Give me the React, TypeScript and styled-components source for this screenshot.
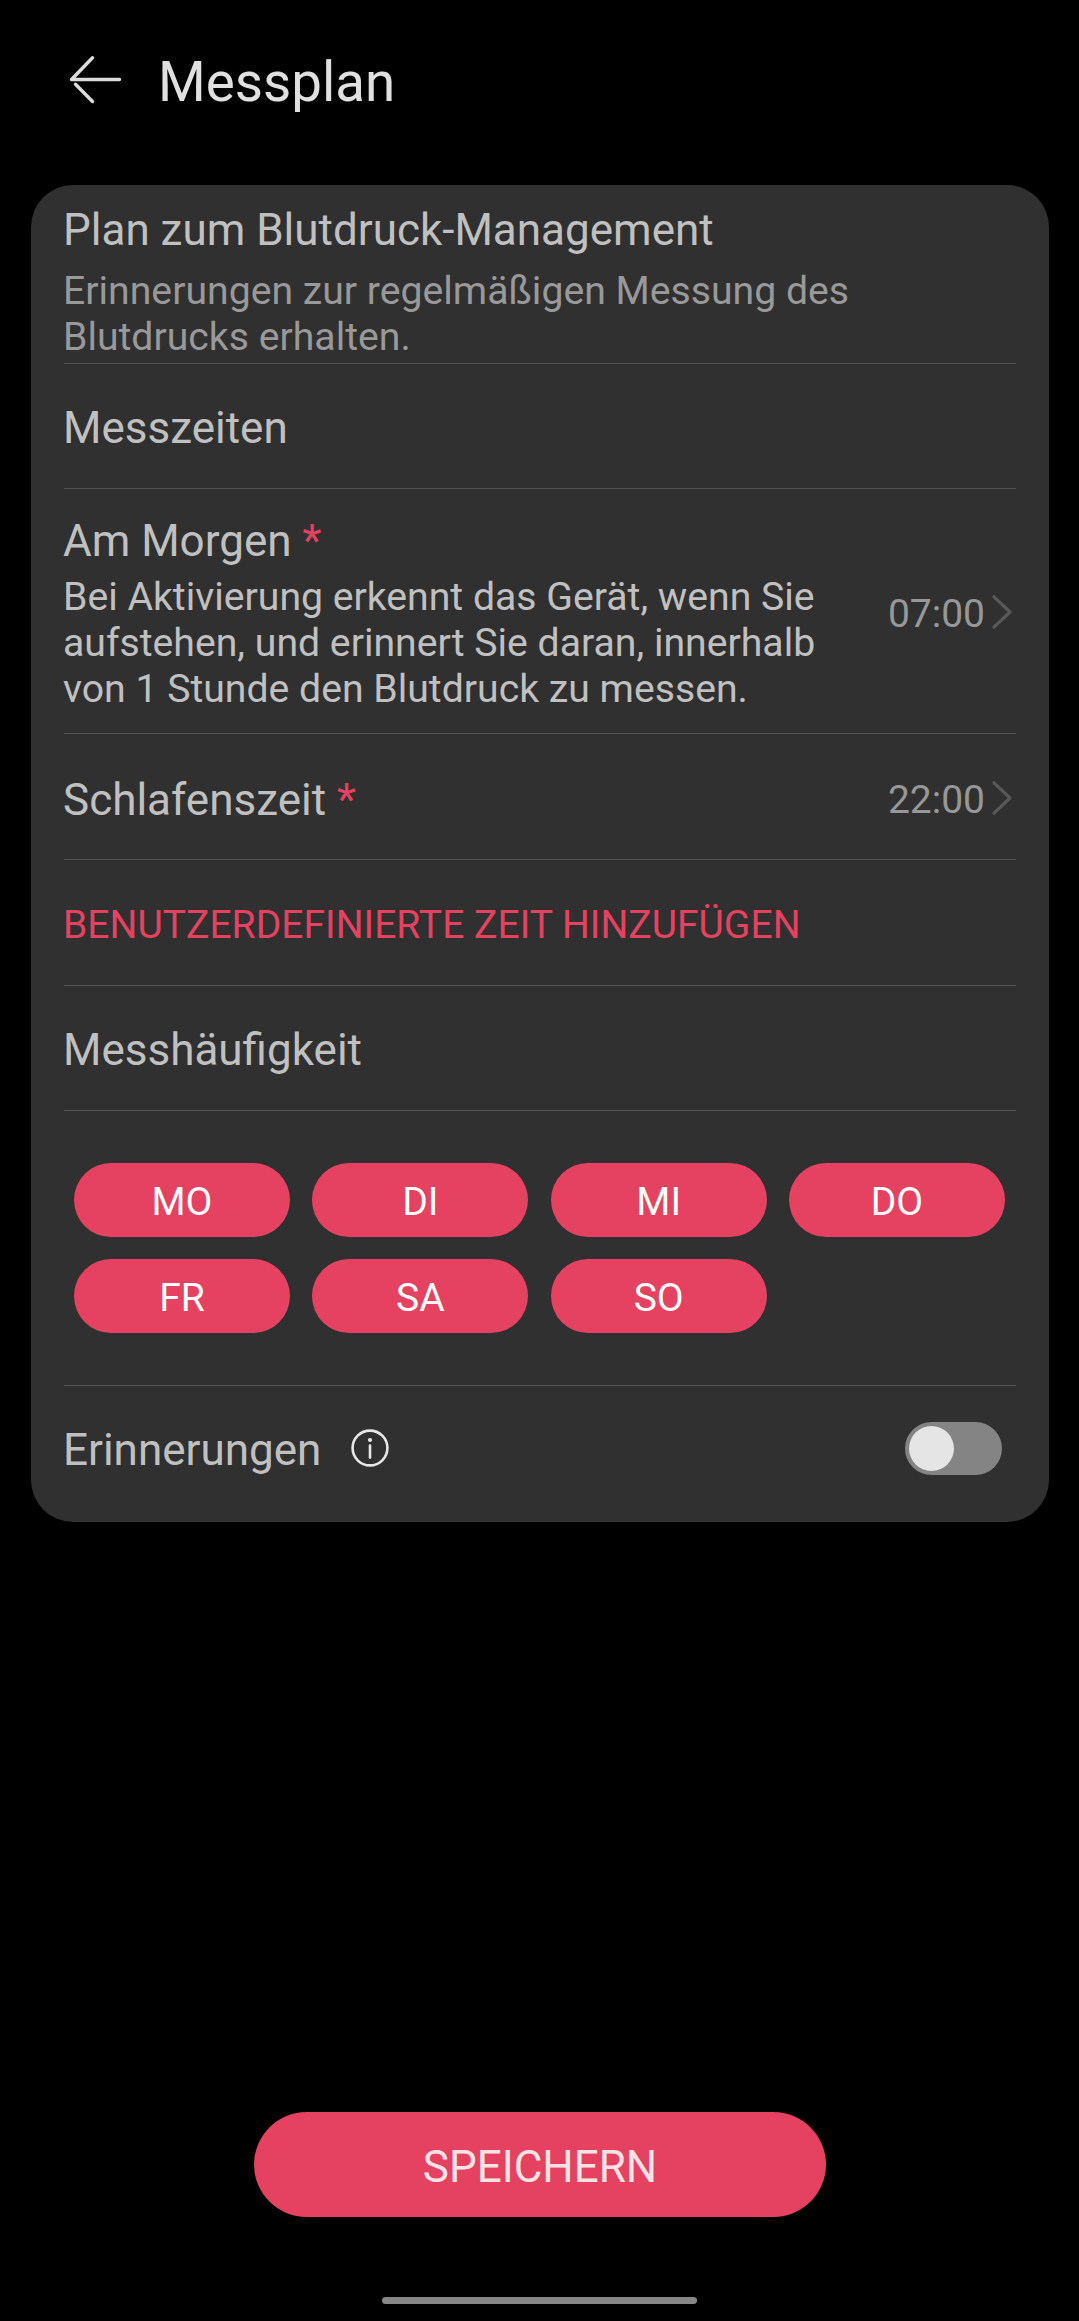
import React, { useState } from 'react';
import styled, { createGlobalStyle } from 'styled-components';

const accent = '#e44260';

const GlobalStyle = createGlobalStyle`
  * { box-sizing: border-box; }
  body { margin: 0; background: #000; }
  button { border: 0; padding: 0; background: none; font: inherit; color: inherit; cursor: pointer; }
`;

const Screen = styled.div`
  width: 1079px;
  height: 2321px;
  display: flex;
  flex-direction: column;
  background: #000;
  color: #c0c0c0;
  font-family: Roboto, sans-serif;
  overflow: hidden;
`;

const Header = styled.header`
  flex: none;
  height: 185px;
  display: flex;
  align-items: flex-start;
  padding: 50px 0 0 66px;
`;

const BackButton = styled.button`
  width: 60px;
  height: 60px;
  margin-right: 32px;
  svg { display: block; }
`;

const Title = styled.h1`
  margin: 0;
  font-size: 54.7px;
  font-weight: 400;
  line-height: 64px;
  color: #e0e0e0;
`;

const Card = styled.main`
  flex: none;
  margin: 0 30px 0 31px;
  height: 1337px;
  padding: 0 33px;
  border-radius: 42px;
  background: #303030;
`;

const Row = styled.section<{ $height: number }>`
  height: ${(p) => p.$height}px;
  display: flex;
  align-items: center;
  justify-content: space-between;
  border-bottom: 1px solid #525252;
`;

const Intro = styled.section`
  height: 179px;
  padding-top: 19px;
  border-bottom: 1px solid #525252;
`;

const Label = styled.h2`
  margin: 0 0 0 -1px;
  font-size: 44px;
  font-weight: 400;
  line-height: 52px;
`;

const RowLabel = styled(Label)<{ $drop?: number }>`
  padding-top: ${(p) => p.$drop ?? 3}px;
`;

const Hint = styled.p<{ $dim?: boolean; $gap: number }>`
  margin: ${(p) => p.$gap}px 0 0 -1px;
  font-size: 39.2px;
  line-height: 46px;
  white-space: pre-line;
  color: ${(p) => (p.$dim ? '#999' : 'inherit')};
`;

const TimeInfo = styled.div`
  padding-top: 5px;
`;

const Required = styled.span`
  color: ${accent};
`;

const TimeButton = styled.button`
  display: flex;
  align-items: center;
  margin-right: 3px;
  padding-top: 2px;
  color: #979797;
`;

const Time = styled.span`
  padding-top: 4px;
  margin-right: 6px;
  font-size: 39px;
  line-height: 46px;
`;

const AddButton = styled.button`
  margin-left: -1px;
  padding-top: 5px;
  font-size: 39.05px;
  line-height: 46px;
  color: ${accent};
`;

const Days = styled.section`
  height: 275px;
  padding: 52px 11px 0 10px;
  display: grid;
  grid-template-columns: repeat(4, 216px);
  grid-auto-rows: 74px;
  justify-content: space-between;
  align-content: start;
  row-gap: 22px;
  border-bottom: 1px solid #525252;
`;

const Day = styled.button<{ $active: boolean }>`
  padding-top: 4px;
  border-radius: 37px;
  background: ${(p) => (p.$active ? accent : '#484848')};
  color: #fff;
  font-size: 39px;
  line-height: 46px;
`;

const Reminder = styled.section`
  height: 125px;
  display: flex;
  align-items: center;
`;

const InfoButton = styled.button`
  margin: 0 0 2px 30px;
  width: 38px;
  height: 38px;
  svg { display: block; }
`;

const Switch = styled.button<{ $on: boolean }>`
  display: flex;
  align-items: center;
  justify-content: ${(p) => (p.$on ? 'flex-end' : 'flex-start')};
  width: 97px;
  height: 53px;
  margin: 0 14.5px 0 auto;
  padding: 0 4px;
  border-radius: 27px;
  background: ${(p) => (p.$on ? accent : '#848484')};
`;

const Knob = styled.span`
  width: 45px;
  height: 45px;
  border-radius: 50%;
  background: #e5e5e5;
`;

const Footer = styled.footer`
  margin-top: auto;
  display: flex;
  flex-direction: column;
  align-items: center;
  padding-bottom: 17px;
`;

const SaveButton = styled.button`
  width: 572px;
  height: 105px;
  padding: 4px 0 0 1px;
  border-radius: 53px;
  background: ${accent};
  color: #fbe3e5;
  font-size: 44px;
  line-height: 52px;
`;

const HomeBar = styled.div`
  width: 315px;
  height: 7px;
  margin-top: 80px;
  border-radius: 4px;
  background: #868686;
`;

const BackIcon = () => (
  <svg width="60" height="60" viewBox="0 0 60 60" fill="none" stroke="#dcdcdc" strokeWidth="3.4" strokeLinecap="round" strokeLinejoin="round">
    <path d="M53.5 29.5H5.5L26.5 7.7M9.5 34.2L26.5 51.5" />
  </svg>
);

const Chevron = () => (
  <svg width="22" height="36" viewBox="0 0 22 36" fill="none" stroke="#585858" strokeWidth="3.2" strokeLinecap="round" strokeLinejoin="round">
    <path d="M3 2.8L19 18L3 33.2" />
  </svg>
);

const InfoIcon = () => (
  <svg width="38" height="38" viewBox="0 0 38 38" fill="none" stroke="#e6e6e6" strokeWidth="2.6">
    <circle cx="19" cy="19" r="17.4" />
    <path d="M19 16.5V28.6" strokeLinecap="round" />
    <circle cx="19" cy="11" r="2.1" fill="#e6e6e6" stroke="none" />
  </svg>
);

const week = ['MO', 'DI', 'MI', 'DO', 'FR', 'SA', 'SO'];

export default function App() {
  const [days, setDays] = useState<string[]>(week);
  const [reminders, setReminders] = useState(false);

  const toggleDay = (day: string) =>
    setDays((cur) => (cur.includes(day) ? cur.filter((d) => d !== day) : [...cur, day]));

  return (
    <>
      <GlobalStyle />
      <Screen>
        <Header>
          <BackButton><BackIcon /></BackButton>
          <Title>Messplan</Title>
        </Header>
        <Card>
          <Intro>
            <Label>Plan zum Blutdruck-Management</Label>
            <Hint $dim $gap={12}>{'Erinnerungen zur regelmäßigen Messung des\nBlutdrucks erhalten.'}</Hint>
          </Intro>
          <Row $height={125}>
            <RowLabel>Messzeiten</RowLabel>
          </Row>
          <Row $height={245}>
            <TimeInfo>
              <Label>Am Morgen <Required>*</Required></Label>
              <Hint $gap={7}>{'Bei Aktivierung erkennt das Gerät, wenn Sie\naufstehen, und erinnert Sie daran, innerhalb\nvon 1 Stunde den Blutdruck zu messen.'}</Hint>
            </TimeInfo>
            <TimeButton><Time>07:00</Time><Chevron /></TimeButton>
          </Row>
          <Row $height={126}>
            <RowLabel $drop={7}>Schlafenszeit <Required>*</Required></RowLabel>
            <TimeButton><Time>22:00</Time><Chevron /></TimeButton>
          </Row>
          <Row $height={126}>
            <AddButton>BENUTZERDEFINIERTE ZEIT HINZUFÜGEN</AddButton>
          </Row>
          <Row $height={125}>
            <RowLabel>Messhäufigkeit</RowLabel>
          </Row>
          <Days>
            {week.map((day) => (
              <Day key={day} $active={days.includes(day)} onClick={() => toggleDay(day)}>{day}</Day>
            ))}
          </Days>
          <Reminder>
            <RowLabel>Erinnerungen</RowLabel>
            <InfoButton><InfoIcon /></InfoButton>
            <Switch $on={reminders} onClick={() => setReminders(!reminders)}><Knob /></Switch>
          </Reminder>
        </Card>
        <Footer>
          <SaveButton>SPEICHERN</SaveButton>
          <HomeBar />
        </Footer>
      </Screen>
    </>
  );
}
